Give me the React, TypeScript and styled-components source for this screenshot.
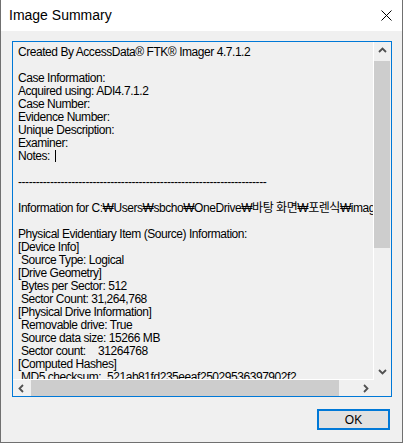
import React from "react";
import styled, { createGlobalStyle } from "styled-components";

const GlobalStyle = createGlobalStyle`
  html, body {
    margin: 0;
    padding: 0;
    background: #ffffff;
  }
`;

const Window = styled.div`
  width: 403px;
  height: 443px;
  box-sizing: border-box;
  border: 1px solid #707070;
  border-top: none;
  background: #f0f0f0;
  display: flex;
  flex-direction: column;
  font-family: "Liberation Sans", Arial, "Noto Sans CJK KR", sans-serif;
  color: #000;
  overflow: hidden;
`;

const TitleBar = styled.div`
  height: 31px;
  flex: none;
  background: #ffffff;
  display: flex;
  align-items: center;
  justify-content: space-between;
  padding: 0 10px 0 8px;
`;

const Title = styled.span`
  font-size: 14px;
  margin-top: -1px;
`;

const CloseIcon = styled.svg`
  display: block;
  margin-top: -1px;
`;

const Body = styled.div`
  flex: 1;
  display: flex;
  flex-direction: column;
  padding: 10px 10px 0 11px;
`;

const TextBox = styled.div`
  height: 356px;
  box-sizing: border-box;
  border: 1px solid #0078d7;
  display: grid;
  grid-template-columns: 361px 17px;
  grid-template-rows: 338px 16px;
`;

const Content = styled.div`
  box-sizing: border-box;
  border-right: 1px solid #ffffff;
  border-bottom: 1px solid #ffffff;
  overflow: hidden;
  padding: 4px 0 0 5px;
  font-size: 12px;
  letter-spacing: -0.45px;
  line-height: 13px;
`;

const Line = styled.div`
  white-space: pre;
  height: 13px;
`;

const Label = styled.span<{ $w: number }>`
  display: inline-block;
  width: ${(p) => p.$w}px;
  white-space: pre;
`;

const Caret = styled.span`
  display: inline-block;
  width: 1px;
  height: 12px;
  background: #000;
  vertical-align: -2px;
  margin-left: 2px;
`;

const ScrollBar = styled.div<{ $vertical?: boolean }>`
  display: flex;
  flex-direction: ${(p) => (p.$vertical ? "column" : "row")};
  background: #f0f0f0;
`;

const ArrowButton = styled.div<{ $vertical?: boolean }>`
  flex: none;
  width: 17px;
  height: ${(p) => (p.$vertical ? "17px" : "16px")};
  display: flex;
  align-items: center;
  justify-content: center;
`;

const Track = styled.div<{ $vertical?: boolean }>`
  flex: 1;
  display: flex;
  flex-direction: ${(p) => (p.$vertical ? "column" : "row")};
  padding: ${(p) => (p.$vertical ? "2px 1px 0 0" : "0 0 0 1px")};
`;

const Thumb = styled.div<{ $size: number; $vertical?: boolean }>`
  background: #cdcdcd;
  flex: none;
  ${(p) =>
    p.$vertical
      ? `height: ${p.$size}px; width: 16px;`
      : `width: ${p.$size}px; height: 16px;`}
`;

const Corner = styled.div`
  background: #f0f0f0;
`;

const Footer = styled.div`
  display: flex;
  justify-content: flex-end;
  padding: 12px 2px 0 0;
`;

const Button = styled.button`
  width: 73px;
  height: 21px;
  box-sizing: border-box;
  border: 2px solid #0078d7;
  background: #e1e1e1;
  font-family: "Liberation Sans", Arial, sans-serif;
  font-size: 12px;
  color: #000;
  padding: 0;
  margin: 0;
`;

type Dir = "up" | "down" | "left" | "right";

const Chevron: React.FC<{ dir: Dir }> = ({ dir }) => {
  const rot = { up: 0, right: 90, down: 180, left: 270 }[dir];
  return (
    <svg width="9" height="9" viewBox="0 0 9 9" style={{ transform: `rotate(${rot}deg)` }}>
      <polyline points="1,6 4.5,2.5 8,6" fill="none" stroke="#505050" strokeWidth="1.8" />
    </svg>
  );
};

const dashes = "-".repeat(70);

const lines: React.ReactNode[] = [
  "Created By AccessData® FTK® Imager 4.7.1.2",
  "",
  "Case Information:",
  "Acquired using: ADI4.7.1.2",
  "Case Number:",
  "Evidence Number:",
  "Unique Description:",
  "Examiner:",
  <>Notes: <Caret /></>,
  "",
  dashes,
  "",
  "Information for C:₩Users₩sbcho₩OneDrive₩바탕 화면₩포렌식₩image.ad1:",
  "",
  "Physical Evidentiary Item (Source) Information:",
  "[Device Info]",
  " Source Type: Logical",
  "[Drive Geometry]",
  " Bytes per Sector: 512",
  " Sector Count: 31,264,768",
  "[Physical Drive Information]",
  " Removable drive: True",
  " Source data size: 15266 MB",
  <><Label $w={80}> Sector count:</Label>31264768</>,
  "[Computed Hashes]",
  <><Label $w={89}> MD5 checksum:</Label>521ab81fd235eeaf25029536397902f2</>,
];

export default function App() {
  return (
    <>
      <GlobalStyle />
      <Window>
        <TitleBar>
          <Title>Image Summary</Title>
          <CloseIcon width="11" height="11" viewBox="0 0 11 11">
            <path d="M0.5 0.5 L10.5 10.5 M10.5 0.5 L0.5 10.5" stroke="#000" strokeWidth="1" />
          </CloseIcon>
        </TitleBar>
        <Body>
          <TextBox>
            <Content>
              {lines.map((l, i) => (
                <Line key={i}>{l}</Line>
              ))}
            </Content>
            <ScrollBar $vertical>
              <ArrowButton $vertical>
                <Chevron dir="up" />
              </ArrowButton>
              <Track $vertical>
                <Thumb $vertical $size={187} />
              </Track>
              <ArrowButton $vertical>
                <Chevron dir="down" />
              </ArrowButton>
            </ScrollBar>
            <ScrollBar>
              <ArrowButton>
                <Chevron dir="left" />
              </ArrowButton>
              <Track>
                <Thumb $size={308} />
              </Track>
              <ArrowButton>
                <Chevron dir="right" />
              </ArrowButton>
            </ScrollBar>
            <Corner />
          </TextBox>
          <Footer>
            <Button>OK</Button>
          </Footer>
        </Body>
      </Window>
    </>
  );
}
